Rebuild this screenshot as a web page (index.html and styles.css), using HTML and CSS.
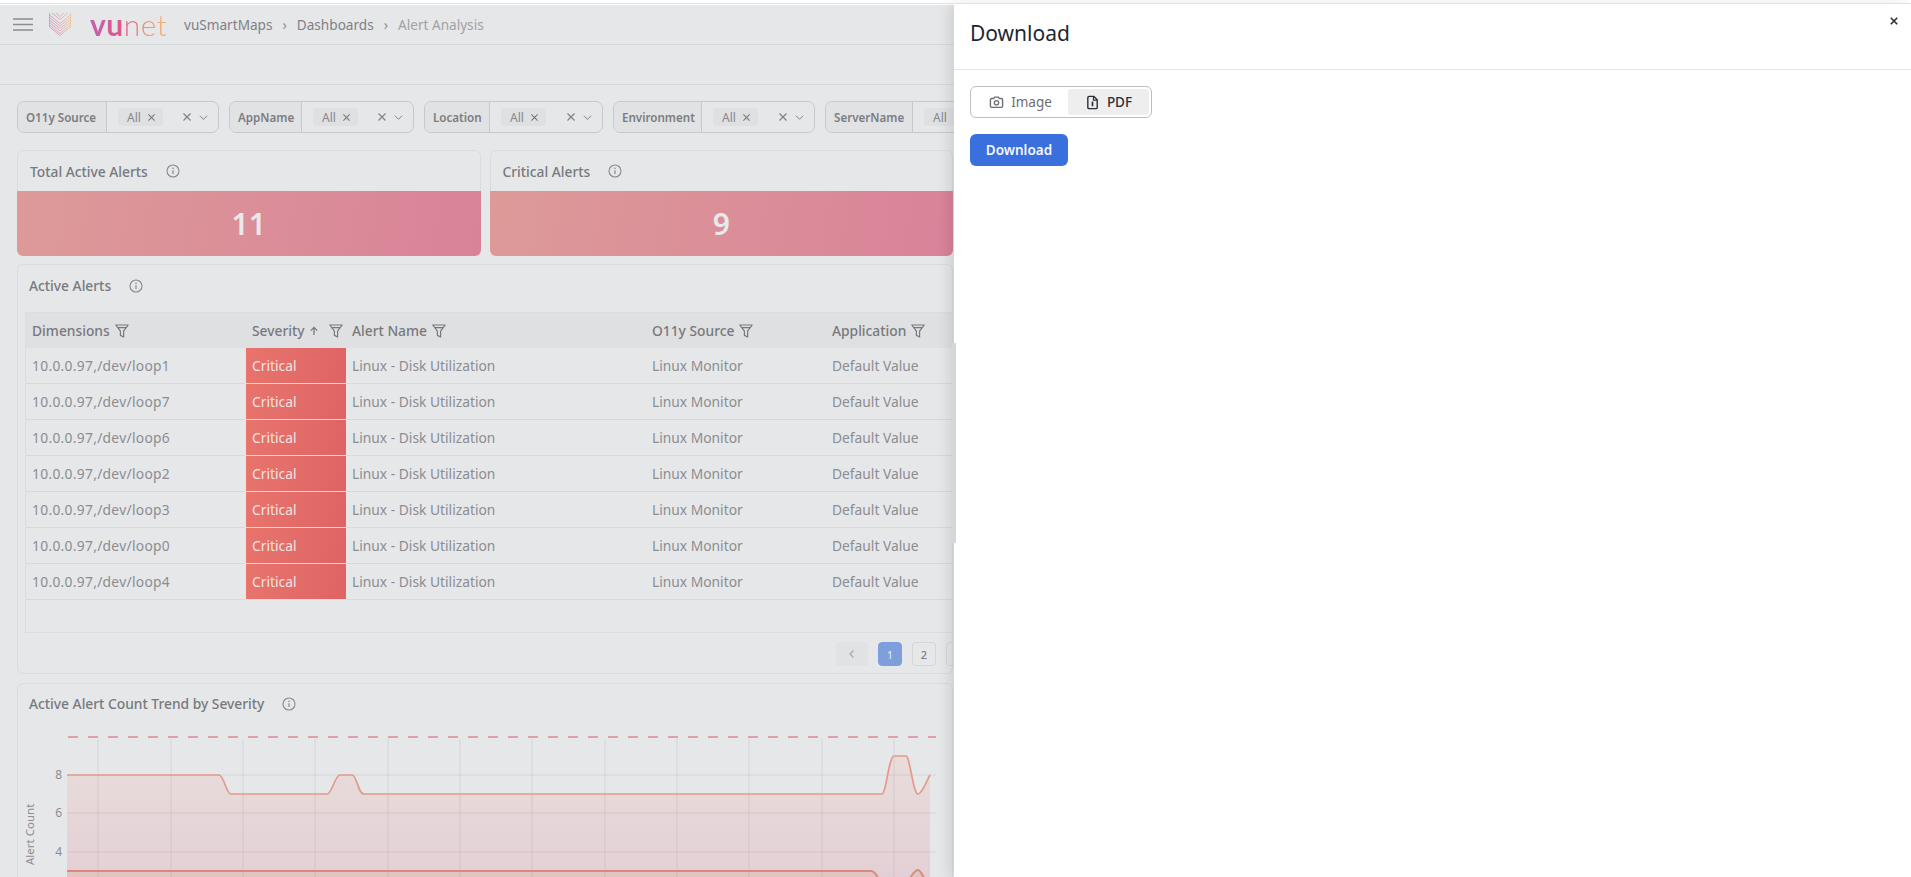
FILE: index.html
```html
<!DOCTYPE html>
<html lang="en">
<head>
<meta charset="utf-8">
<title>Alert Analysis</title>
<link rel="stylesheet" href="styles.css">
</head>
<body>
<svg class="sprite" width="0" height="0" aria-hidden="true">
  <defs>
    <symbol id="i-info" viewBox="0 0 14 14"><circle cx="7" cy="7" r="6" fill="none" stroke="currentColor" stroke-width="1.1"/><circle cx="7" cy="4.3" r=".8" fill="currentColor"/><path d="M7 6.3v3.6" stroke="currentColor" stroke-width="1.2" fill="none"/></symbol>
    <symbol id="i-x" viewBox="0 0 10 10"><path d="M1.5 1.5l7 7M8.500 1.500l-7 7" stroke="currentColor" stroke-width="1.200" fill="none"/></symbol>
    <symbol id="i-xb" viewBox="0 0 10 10"><path d="M1 1l8 8M9 1l-8 8" stroke="currentColor" stroke-width="2" fill="none"/></symbol>
    <symbol id="i-chev" viewBox="0 0 10 10"><path d="M1 3l4 4 4-4" stroke="currentColor" stroke-width="1.100" fill="none"/></symbol>
    <symbol id="i-funnel" viewBox="0 0 14 14"><path d="M.8 1h12.400L8.600 7.200v5.800L5.400 11.400V7.200z M2.800 3.600h8.400" fill="none" stroke="currentColor" stroke-width="1.200" stroke-linejoin="round"/></symbol>
    <symbol id="i-up" viewBox="0 0 10 10"><path d="M5 9V1.500M1.800 4.600L5 1.400l3.200 3.200" fill="none" stroke="currentColor" stroke-width="1.300"/></symbol>
  </defs>
</svg>

<div class="screen">
  <div class="top-line"></div>
  <main class="page">
    <header class="nav">
      <svg class="burger" viewBox="0 0 20 13"><path d="M0 1h20M0 6.500h20M0 12h20" stroke="#8b8d90" stroke-width="1.600" fill="none"/></svg>
      <svg class="mark" viewBox="0 0 22 23">
        <defs><linearGradient id="markg" x1="0" y1="0" x2="1" y2="0"><stop offset="0" stop-color="#c88bbb"/><stop offset=".5" stop-color="#e594a8"/><stop offset="1" stop-color="#ecc08a"/></linearGradient></defs>
        <g fill="none" stroke="url(#markg)" stroke-width=".75">
          <path d="M.5 0v14l10.500 8.500L21.500 14V0"/>
          <path d="M.5 2l10.500 8.500L21.500 2"/>
          <path d="M.5 4.500l10.500 8.500L21.500 4.500"/>
          <path d="M.5 7l10.500 8.500L21.500 7"/>
          <path d="M.5 9.500l10.500 8.500L21.500 9.500"/>
          <path d="M.5 12l10.500 8.500L21.500 12"/>
          <path d="M3 0l8 6.500L19 0M7 0l4 3.500L15 0"/>
        </g>
      </svg>
      <span class="brand"><span class="brand-vu">vu</span><span class="brand-net">net</span></span>
      <nav class="crumbs">
        <span>vuSmartMaps</span><span class="sep">›</span><span>Dashboards</span><span class="sep">›</span><span class="crumb-last">Alert Analysis</span>
      </nav>
    </header>
    <div class="subbar"></div>

    <section class="filters">
      <div class="filter f-source"><span class="f-label">O11y Source</span><span class="f-body"><span class="chip">All <svg class="ic-x"><use href="#i-x"/></svg></span><span class="f-tools"><svg class="ic-xl"><use href="#i-x"/></svg><svg class="ic-chev"><use href="#i-chev"/></svg></span></span></div>
      <div class="filter f-app"><span class="f-label">AppName</span><span class="f-body"><span class="chip">All <svg class="ic-x"><use href="#i-x"/></svg></span><span class="f-tools"><svg class="ic-xl"><use href="#i-x"/></svg><svg class="ic-chev"><use href="#i-chev"/></svg></span></span></div>
      <div class="filter f-loc"><span class="f-label">Location</span><span class="f-body"><span class="chip">All <svg class="ic-x"><use href="#i-x"/></svg></span><span class="f-tools"><svg class="ic-xl"><use href="#i-x"/></svg><svg class="ic-chev"><use href="#i-chev"/></svg></span></span></div>
      <div class="filter f-env"><span class="f-label">Environment</span><span class="f-body"><span class="chip">All <svg class="ic-x"><use href="#i-x"/></svg></span><span class="f-tools"><svg class="ic-xl"><use href="#i-x"/></svg><svg class="ic-chev"><use href="#i-chev"/></svg></span></span></div>
      <div class="filter f-srv"><span class="f-label">ServerName</span><span class="f-body"><span class="chip">All <svg class="ic-x"><use href="#i-x"/></svg></span><span class="f-tools"><svg class="ic-xl"><use href="#i-x"/></svg><svg class="ic-chev"><use href="#i-chev"/></svg></span></span></div>
    </section>

    <section class="stats">
      <article class="stat">
        <h3 class="card-title">Total Active Alerts <svg class="ic-info"><use href="#i-info"/></svg></h3>
        <div class="stat-value">11</div>
      </article>
      <article class="stat">
        <h3 class="card-title">Critical Alerts <svg class="ic-info"><use href="#i-info"/></svg></h3>
        <div class="stat-value">9</div>
      </article>
    </section>

    <article class="card alerts">
      <h3 class="card-title">Active Alerts <svg class="ic-info"><use href="#i-info"/></svg></h3>
      <div class="table-frame">
        <div class="trow thead">
          <div class="c c-dim">Dimensions <svg class="ic-funnel"><use href="#i-funnel"/></svg></div>
          <div class="c c-sev">Severity<svg class="ic-up"><use href="#i-up"/></svg><svg class="ic-funnel funnel-end"><use href="#i-funnel"/></svg></div>
          <div class="c c-name">Alert Name <svg class="ic-funnel"><use href="#i-funnel"/></svg></div>
          <div class="c c-src">O11y Source <svg class="ic-funnel"><use href="#i-funnel"/></svg></div>
          <div class="c c-app">Application <svg class="ic-funnel"><use href="#i-funnel"/></svg></div>
        </div>
        <div class="trow"><div class="c c-dim c-ip">10.0.0.97,/dev/loop1</div><div class="c c-sev crit">Critical</div><div class="c c-name">Linux - Disk Utilization</div><div class="c c-src">Linux Monitor</div><div class="c c-app">Default Value</div></div>
        <div class="trow"><div class="c c-dim c-ip">10.0.0.97,/dev/loop7</div><div class="c c-sev crit">Critical</div><div class="c c-name">Linux - Disk Utilization</div><div class="c c-src">Linux Monitor</div><div class="c c-app">Default Value</div></div>
        <div class="trow"><div class="c c-dim c-ip">10.0.0.97,/dev/loop6</div><div class="c c-sev crit">Critical</div><div class="c c-name">Linux - Disk Utilization</div><div class="c c-src">Linux Monitor</div><div class="c c-app">Default Value</div></div>
        <div class="trow"><div class="c c-dim c-ip">10.0.0.97,/dev/loop2</div><div class="c c-sev crit">Critical</div><div class="c c-name">Linux - Disk Utilization</div><div class="c c-src">Linux Monitor</div><div class="c c-app">Default Value</div></div>
        <div class="trow"><div class="c c-dim c-ip">10.0.0.97,/dev/loop3</div><div class="c c-sev crit">Critical</div><div class="c c-name">Linux - Disk Utilization</div><div class="c c-src">Linux Monitor</div><div class="c c-app">Default Value</div></div>
        <div class="trow"><div class="c c-dim c-ip">10.0.0.97,/dev/loop0</div><div class="c c-sev crit">Critical</div><div class="c c-name">Linux - Disk Utilization</div><div class="c c-src">Linux Monitor</div><div class="c c-app">Default Value</div></div>
        <div class="trow"><div class="c c-dim c-ip">10.0.0.97,/dev/loop4</div><div class="c c-sev crit">Critical</div><div class="c c-name">Linux - Disk Utilization</div><div class="c c-src">Linux Monitor</div><div class="c c-app">Default Value</div></div>
      </div>
      <div class="pager">
        <span class="pg pg-prev"><svg class="ic-prev" viewBox="0 0 10 10"><path d="M6.500 1.500L3 5l3.500 3.500" fill="none" stroke="currentColor" stroke-width="1.200"/></svg></span><span class="pg pg-on">1</span><span class="pg">2</span><span class="pg"></span>
      </div>
    </article>

    <article class="card trend">
      <h3 class="card-title">Active Alert Count Trend by Severity <svg class="ic-info"><use href="#i-info"/></svg></h3>
      <svg class="chart" viewBox="0 0 934 154" width="934" height="154">
        <defs>
          <linearGradient id="areag" x1="0" y1="0" x2="0" y2="1"><stop offset="0" stop-color="#e9dcda"/><stop offset="1" stop-color="#e3d0d6"/></linearGradient>
        </defs>
        <g transform="translate(-18,-723)">
          <path class="area" d="M67 775H219C224 775 226 794 231 794H327C332 794 335 775 340 775H352C357 775 358 794 364 794H882C886 794 889 756 894 756H906C910 756 913 794 918 794C922 794 926 782 930 775V877H67Z"/>
          <path class="area-low" d="M67 871H871C874 871 876 874 878 877H910C913 874 915 870 918 870C920 870 922 874 924 877H67Z"/>
          <g class="grid">
            <path d="M67 775H936M67 813H936M67 852H936"/>
            <path d="M98 739V877M171 739V877M243 739V877M315 739V877M388 739V877M460 739V877M532 739V877M605 739V877M677 739V877M749 739V877M822 739V877M894 739V877"/>
          </g>
          <path class="dash" d="M68 737H936"/>
          <path class="line" d="M67 775H219C224 775 226 794 231 794H327C332 794 335 775 340 775H352C357 775 358 794 364 794H882C886 794 889 756 894 756H906C910 756 913 794 918 794C922 794 926 782 930 775"/>
          <path class="line line-low" d="M67 871H871C874 871 876 874 878 878M910 878C913 874 915 870 918 870C920 870 922 874 924 878"/>
          <text class="tick" x="62" y="779" text-anchor="end">8</text>
          <text class="tick" x="62" y="817" text-anchor="end">6</text>
          <text class="tick" x="62" y="856" text-anchor="end">4</text>
          <text class="axis" transform="translate(34,865) rotate(-90)">Alert Count</text>
        </g>
      </svg>
    </article>
  </main>

  <div class="scroll-thumb"></div>

  <aside class="drawer">
    <header class="drawer-head">
      <h2 class="drawer-title">Download</h2>
      <svg class="drawer-close"><use href="#i-xb"/></svg>
    </header>
    <div class="drawer-body">
      <div class="segment">
        <span class="seg-item">
          <svg class="seg-ic" viewBox="0 0 16 16"><path d="M1.500 5.200c0-.8.6-1.400 1.400-1.400h2L6 2.300h4l1.100 1.500h2c.8 0 1.400.6 1.400 1.400v6.600c0 .8-.6 1.400-1.400 1.400H2.900c-.8 0-1.400-.6-1.400-1.400z" fill="none" stroke="currentColor" stroke-width="1.500"/><circle cx="8" cy="8.300" r="2.300" fill="none" stroke="currentColor" stroke-width="1.400"/></svg>Image
        </span>
        <span class="seg-item seg-on">
          <svg class="seg-ic" viewBox="0 0 16 16"><path d="M3 2.800c0-.7.5-1.300 1.300-1.300h5.200L13 5v8.200c0 .7-.6 1.300-1.300 1.300H4.300c-.8 0-1.300-.6-1.300-1.300z" fill="none" stroke="currentColor" stroke-width="1.500"/><path d="M9 1.500V5.500h4" fill="none" stroke="currentColor" stroke-width="1.200"/><path d="M8 7v5" stroke="currentColor" stroke-width="1.800"/></svg>PDF
        </span>
      </div>
      <button class="btn-primary" type="button">Download</button>
    </div>
  </aside>
</div>
</body>
</html>
```
FILE: styles.css
```css
* { box-sizing: border-box; }
html, body { margin: 0; height: 100%; overflow: hidden; }
body { font-family: "Noto Sans", "Open Sans", sans-serif; background: #fff; color: #7d7f83; }
.sprite { position: absolute; }

.screen { position: relative; width: 1911px; height: 877px; overflow: hidden; background: #fff; }
.top-line { margin-top: 3px; height: 2px; border-top: 1px solid #e2e2e2; position: relative; z-index: 3; }
.page { width: 954px; height: 872px; background: #e6e7e9; overflow: hidden; }

/* nav */
.nav { height: 40px; display: flex; align-items: center; padding-left: 13px; border-bottom: 1px solid #d8d9db; }
.burger { width: 20px; height: 13px; flex: none; }
.mark { width: 22px; height: 23px; flex: none; margin-left: 16px; }
.brand { margin-left: 19px; width: 76px; font-family: "Lato", sans-serif; font-size: 30px; line-height: 30px; height: 32px; letter-spacing: .5px; background: linear-gradient(90deg, #c062ae 0%, #e0588c 42%, #ee8a78 68%, #efb36c 100%); -webkit-background-clip: text; background-clip: text; color: transparent; flex: none; }
.brand-vu { font-weight: 700; }
.brand-net { font-weight: 300; }
.crumbs { margin-left: 18px; display: flex; align-items: center; font-size: 13.6px; color: #7f8186; }
.sep { margin: 0 10px; font-size: 14px; color: #8b8d90; }
.crumb-last { color: #a0a2a6; }

.subbar { height: 40px; border-bottom: 1px solid #d8d9db; }

/* filters */
.filters { display: flex; gap: 10px; padding: 16px 0 0 17px; height: 65px; }
.filter { flex: none; height: 32px; display: flex; border: 1px solid #c8c9cb; border-radius: 7px; font-size: 11.6px; font-weight: 600; overflow: hidden; }
.f-label { flex: none; display: flex; align-items: center; padding-left: 8px; background: #e1e2e4; border-right: 1px solid #c8c9cb; color: #7b7d81; white-space: nowrap; }
.f-body { flex: 1; display: flex; align-items: center; position: relative; padding-left: 11px; }
.f-source { width: 202px; } .f-source .f-label { width: 89px; }
.f-app { width: 185px; } .f-app .f-label { width: 72px; }
.f-loc { width: 179px; } .f-loc .f-label { width: 65px; }
.f-env { width: 202px; } .f-env .f-label { width: 88px; }
.f-srv { width: 202px; } .f-srv .f-label { width: 87px; }
.chip { display: flex; align-items: center; gap: 6px; height: 18px; width: 45px; padding-left: 9px; background: #dfe0e2; border-radius: 4px; font-weight: 400; font-size: 12px; color: #85878b; }
.f-tools { margin-left: auto; margin-right: 10px; display: flex; align-items: center; gap: 7px; color: #808286; }
.ic-x { width: 9px; height: 9px; color: #77797d; flex: none; }
.ic-xl { width: 10px; height: 10px; }
.ic-chev { width: 9px; height: 9px; }

/* cards */
.card { background: #e6e7e9; border: 1px solid #dadbdd; border-radius: 6px; overflow: hidden; }
.card-title { margin: 0; display: flex; align-items: center; font-size: 13.8px; font-weight: 500; color: #77797d; white-space: nowrap; }
.ic-info { width: 14px; height: 14px; color: #88898d; margin-left: 18px; flex: none; }

.stats { display: flex; gap: 9px; margin-left: 17px; width: 936px; }
.stat { flex: 1; height: 106px; display: flex; flex-direction: column; border-radius: 6px; overflow: hidden; }
.stat .card-title { height: 41px; padding-left: 12px; border: 1px solid #dadbdd; border-bottom: 0; border-radius: 6px 6px 0 0; }
.stat-value { flex: 1; display: flex; align-items: center; justify-content: center; background: linear-gradient(100deg, #dd9a98 0%, #d98399 100%); color: #e9e9ec; font-size: 30px; font-weight: 600; }

.alerts { margin: 8px 0 0 17px; width: 936px; height: 410px; }
.alerts .card-title { height: 47px; padding: 0 11px 6px; }
.table-frame { margin-left: 7px; height: 321px; border: 1px solid #dcdddf; border-right: 0; overflow: hidden; }
.trow { display: grid; grid-template-columns: 220px 100px 300px 180px 1fr; height: 36px; border-bottom: 1px solid #d8d9db; align-items: stretch; font-size: 13.8px; color: #8b8d91; }
.thead { height: 35px; background: #dfe0e2; color: #77797d; font-weight: 500; border-bottom: 0; }
.c { display: flex; align-items: center; padding-left: 6px; white-space: nowrap; }
.c-ip { letter-spacing: .3px; }
.ic-funnel { width: 14px; height: 14px; margin-left: 5px; color: #77797d; flex: none; }
.funnel-end { margin-left: auto; margin-right: 3px; }
.ic-up { width: 10px; height: 10px; margin-left: 4px; color: #77797d; flex: none; }
.crit { background: linear-gradient(100deg, #e8746c, #de6464); color: #efe5e5; margin-bottom: -1px; border-bottom: 1px solid #efd9d8; }

.pager { display: flex; gap: 10px; margin-top: 9px; padding-left: 818px; }
.pg { flex: none; width: 24px; height: 24px; border: 1px solid #d5d6d8; border-radius: 4px; display: flex; align-items: center; justify-content: center; font-size: 11px; font-weight: 500; color: #7d7f83; }
.pg-prev { width: 32px; background: #e1e2e4; border: 0; color: #a5a7aa; }
.ic-prev { width: 10px; height: 10px; }
.pg-on { background: #7f9fdc; border-color: #7f9fdc; color: #d9e2f2; }

.trend { margin: 9px 0 0 17px; width: 936px; height: 300px; }
.trend .card-title { height: 39px; padding: 0 11px; }
.chart { display: block; }
.area { fill: url(#areag); }
.area-low { fill: #e4b9b6; opacity: .55; }
.grid path { stroke: #8a8a8e; stroke-opacity: .18; stroke-width: 1; fill: none; }
.dash { stroke: #dfa0a7; stroke-width: 2; stroke-dasharray: 10 10; fill: none; }
.line { stroke: #e29a8b; stroke-width: 1.700; fill: none; }
.line-low { stroke: #dc8a78; stroke-width: 2; }
.tick { font-size: 12px; fill: #8b8d91; font-family: "Noto Sans", sans-serif; }
.axis { font-size: 11.500px; fill: #8b8d91; font-family: "Noto Sans", sans-serif; }

/* overlays */
.scroll-thumb { position: absolute; left: 952px; top: 343px; width: 4px; height: 200px; background: #d5d6d7; z-index: 2; }
.drawer { position: absolute; left: 954px; top: 4px; width: 957px; height: 873px; background: #fff; box-shadow: -5px 0 12px rgba(0,0,0,.1); z-index: 1; color: #1f2937; }
.drawer-head { height: 66px; border-bottom: 1px solid #e4e4e6; position: relative; padding: 17px 0 0 16px; }
.drawer-title { margin: 0; font-size: 21px; font-weight: 400; line-height: 24px; color: #1f2733; }
.drawer-close { position: absolute; right: 13px; top: 13px; width: 8px; height: 8px; color: #2a2f36; }
.drawer-body { padding: 16px; display: flex; flex-direction: column; align-items: flex-start; gap: 16px; }
.segment { width: 182px; height: 32px; padding: 2px; border: 1px solid #bdbec0; border-radius: 6px; display: flex; }
.seg-item { flex: 1; display: flex; align-items: center; justify-content: center; gap: 7px; font-size: 13.500px; color: #6b6e73; border-radius: 3px; }
.seg-on { flex: none; width: 81px; background: #eeeeef; color: #2b3038; font-weight: 500; }
.seg-ic { width: 15px; height: 15px; flex: none; }
.btn-primary { width: 98px; height: 32px; border: 0; border-radius: 6px; background: #3a70dd; color: #f4f7fd; font: 600 13.500px "Noto Sans", sans-serif; }
```
